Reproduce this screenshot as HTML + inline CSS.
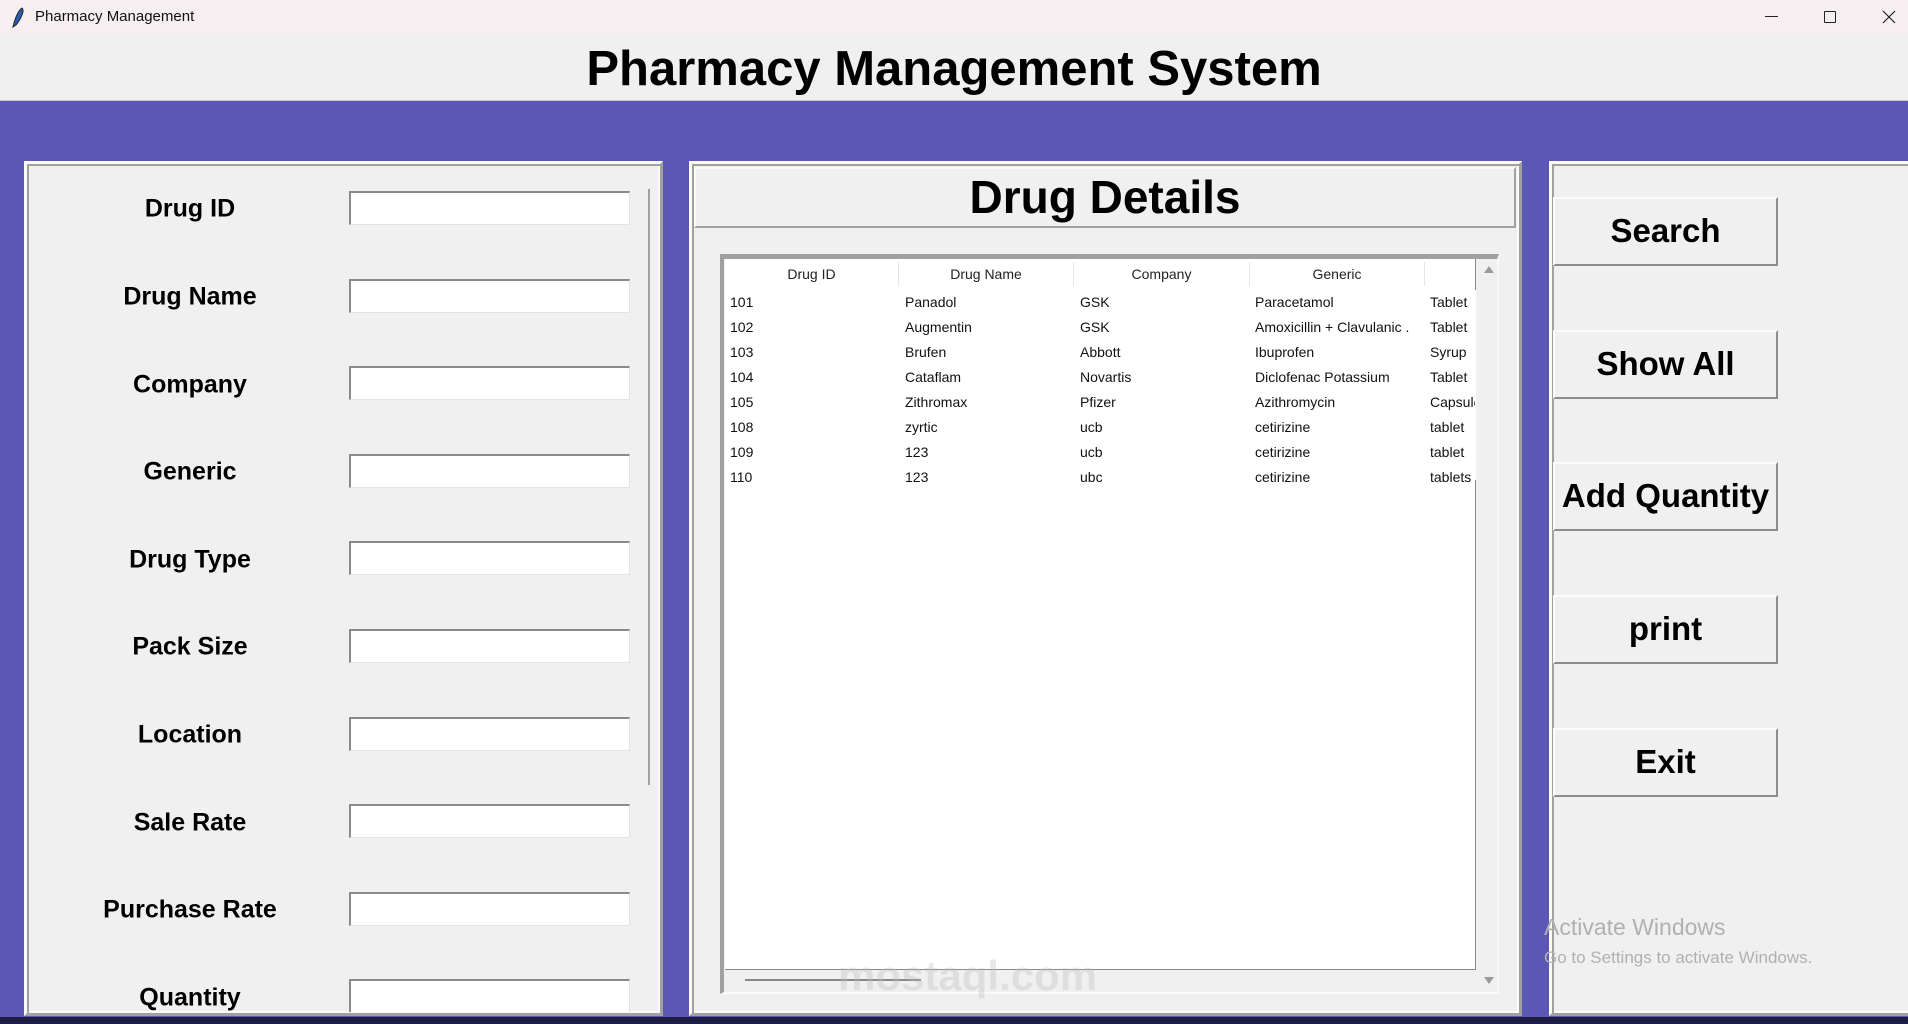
<!DOCTYPE html>
<html><head><meta charset="utf-8"><style>
*{box-sizing:border-box;margin:0;padding:0}
body{width:1908px;height:1024px;overflow:hidden;background:#5a58b4;font-family:"Liberation Sans",Arial,sans-serif;position:relative}
.abs{position:absolute}
.tb{left:0;top:0;width:1908px;height:35px;background:#f6eff1}
.hdr{left:0;top:35px;width:1908px;height:66px;background:#f0f0f0;border-bottom:1px solid #c8c8c8}
.panel{background:#f0f0f0;border-top:3px solid #fafafa;border-left:3px solid #fafafa;border-right:3px solid #a0a0a0;border-bottom:3px solid #a0a0a0;box-shadow:inset 2px 2px 0 #a0a0a0,inset -2px -2px 0 #fafafa}
.lbl{width:300px;left:40px;text-align:center;font-weight:bold;font-size:25px;color:#000;transform:translateY(-50%)}
.ent{left:349px;width:281px;height:34px;background:#fff;border-top:2px solid #8a8a8a;border-left:2px solid #8a8a8a;border-right:1px solid #e3e3e3;border-bottom:1px solid #e3e3e3}
.btn{left:1553px;width:225px;height:69px;background:#f0f0f0;border-top:2px solid #fbfbfb;border-left:2px solid #fbfbfb;border-right:2px solid #8c8c8c;border-bottom:2px solid #8c8c8c;font-weight:bold;font-size:33px;text-align:center;line-height:64px;color:#000}
.th{top:262px;height:24px;font-size:14px;color:#222;text-align:center;line-height:24px;border-right:1px solid #e6e6e6}
.row{font-size:14px;color:#111;height:25px;line-height:25px;white-space:nowrap}
.row span{position:absolute;top:0}
</style></head><body>
<div class="abs tb"></div>
<svg class="abs" style="left:10px;top:7px" width="16" height="22" viewBox="0 0 16 22"><path d="M12 1 C15 3 11 12 6 18 L3 20 L4 16 C6 9 9 3 12 1Z" fill="#2a5db0" stroke="#222" stroke-width="1"/></svg>
<div class="abs" style="left:35px;top:8px;font-size:15px;color:#111">Pharmacy Management</div>
<div class="abs" style="left:1765px;top:16px;width:13px;height:1px;background:#222"></div>
<div class="abs" style="left:1824px;top:11px;width:12px;height:12px;border:1px solid #222;border-radius:1px"></div>
<svg class="abs" style="left:1882px;top:10px" width="14" height="14"><path d="M1 1L13 13M13 1L1 13" stroke="#222" stroke-width="1.2"/></svg>
<div class="abs hdr"></div>
<div class="abs" style="left:0;width:1908px;top:39px;text-align:center;font-weight:bold;font-size:49px;color:#000;line-height:60px">Pharmacy Management System</div>

<div class="abs panel" style="left:24px;top:161px;width:639px;height:855px"></div>
<div class="abs" style="left:648px;top:189px;width:2px;height:596px;background:#a0a0a0"></div>
<div class="abs lbl" style="top:209px">Drug ID</div><div class="abs ent" style="top:191px"></div>
<div class="abs lbl" style="top:297px">Drug Name</div><div class="abs ent" style="top:279px"></div>
<div class="abs lbl" style="top:385px">Company</div><div class="abs ent" style="top:366px"></div>
<div class="abs lbl" style="top:472px">Generic</div><div class="abs ent" style="top:454px"></div>
<div class="abs lbl" style="top:560px">Drug Type</div><div class="abs ent" style="top:541px"></div>
<div class="abs lbl" style="top:647px">Pack Size</div><div class="abs ent" style="top:629px"></div>
<div class="abs lbl" style="top:735px">Location</div><div class="abs ent" style="top:717px"></div>
<div class="abs lbl" style="top:823px">Sale Rate</div><div class="abs ent" style="top:804px"></div>
<div class="abs lbl" style="top:910px">Purchase Rate</div><div class="abs ent" style="top:892px"></div>
<div class="abs lbl" style="top:998px">Quantity</div><div class="abs ent" style="top:979px;height:33px;border-bottom:none"></div>

<div class="abs panel" style="left:689px;top:161px;width:833px;height:855px"></div>
<div class="abs" style="left:694px;top:167px;width:822px;height:61px;background:#f0f0f0;border-top:2px solid #fafafa;border-left:2px solid #fafafa;border-right:2px solid #a0a0a0;border-bottom:2px solid #a0a0a0;text-align:center;font-weight:bold;font-size:46px;line-height:56px">Drug Details</div>
<div class="abs" style="left:720px;top:254px;width:779px;height:740px;background:#f0f0f0;border-top:5px solid #a0a0a0;border-left:4px solid #a0a0a0;border-right:2px solid #fafafa;border-bottom:2px solid #fafafa"></div>
<div class="abs" style="left:725px;top:259px;width:751px;height:711px;background:#fff;border-right:1px solid #888;border-bottom:1px solid #888"></div>
<div class="abs" style="left:1484px;top:266px;width:0;height:0;border-left:5px solid transparent;border-right:5px solid transparent;border-bottom:7px solid #9a9a9a"></div>
<div class="abs" style="left:1484px;top:977px;width:0;height:0;border-left:5px solid transparent;border-right:5px solid transparent;border-top:7px solid #9a9a9a"></div>
<div class="abs" style="left:745px;top:979px;width:176px;height:2px;background:#888"></div>
<div class="abs th" style="left:725px;width:174px">Drug ID</div>
<div class="abs th" style="left:899px;width:175px">Drug Name</div>
<div class="abs th" style="left:1074px;width:176px">Company</div>
<div class="abs th" style="left:1250px;width:175px">Generic</div>
<div class="abs" style="left:725px;top:290px;width:751px;height:210px;overflow:hidden">
<div class="abs row" style="top:0;width:751px"><span style="left:5px">101</span><span style="left:180px">Panadol</span><span style="left:355px">GSK</span><span style="left:530px">Paracetamol</span><span style="left:705px">Tablet</span></div>
<div class="abs row" style="top:25px;width:751px"><span style="left:5px">102</span><span style="left:180px">Augmentin</span><span style="left:355px">GSK</span><span style="left:530px">Amoxicillin + Clavulanic .</span><span style="left:705px">Tablet</span></div>
<div class="abs row" style="top:50px;width:751px"><span style="left:5px">103</span><span style="left:180px">Brufen</span><span style="left:355px">Abbott</span><span style="left:530px">Ibuprofen</span><span style="left:705px">Syrup</span></div>
<div class="abs row" style="top:75px;width:751px"><span style="left:5px">104</span><span style="left:180px">Cataflam</span><span style="left:355px">Novartis</span><span style="left:530px">Diclofenac Potassium</span><span style="left:705px">Tablet</span></div>
<div class="abs row" style="top:100px;width:751px"><span style="left:5px">105</span><span style="left:180px">Zithromax</span><span style="left:355px">Pfizer</span><span style="left:530px">Azithromycin</span><span style="left:705px">Capsule</span></div>
<div class="abs row" style="top:125px;width:751px"><span style="left:5px">108</span><span style="left:180px">zyrtic</span><span style="left:355px">ucb</span><span style="left:530px">cetirizine</span><span style="left:705px">tablet</span></div>
<div class="abs row" style="top:150px;width:751px"><span style="left:5px">109</span><span style="left:180px">123</span><span style="left:355px">ucb</span><span style="left:530px">cetirizine</span><span style="left:705px">tablet</span></div>
<div class="abs row" style="top:175px;width:751px"><span style="left:5px">110</span><span style="left:180px">123</span><span style="left:355px">ubc</span><span style="left:530px">cetirizine</span><span style="left:705px">tablets</span></div>
</div>
<div class="abs" style="left:1475px;top:290px;width:1px;height:190px;background:#fff"></div>
<div class="abs" style="left:838px;top:952px;font-size:42px;font-weight:bold;color:rgba(190,190,190,0.35)">mostaql.com</div>

<div class="abs panel" style="left:1549px;top:161px;width:370px;height:855px"></div>
<div class="abs btn" style="top:197px">Search</div>
<div class="abs btn" style="top:330px">Show All</div>
<div class="abs btn" style="top:462px">Add Quantity</div>
<div class="abs btn" style="top:595px">print</div>
<div class="abs btn" style="top:728px">Exit</div>
<div class="abs" style="left:1544px;top:914px;font-size:23px;color:#b0b0b0">Activate Windows</div>
<div class="abs" style="left:1544px;top:948px;font-size:17px;color:#b0b0b0">Go to Settings to activate Windows.</div>
<div class="abs" style="left:0;top:1017px;width:1908px;height:7px;background:#1d1d45"></div>
</body></html>
